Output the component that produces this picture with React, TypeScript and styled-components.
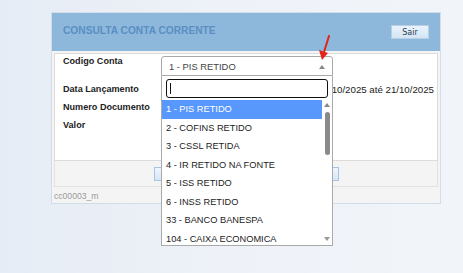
import React from "react";
import styled, { createGlobalStyle } from "styled-components";

const Global = createGlobalStyle`
  html, body { margin: 0; padding: 0; }
  body {
    width: 463px; height: 273px; overflow: hidden;
    background: linear-gradient(90deg, #e6ecf5 0%, #eef2f8 50%, #f1f4f9 100%);
    font-family: "Liberation Sans", Arial, sans-serif;
  }
`;

const Page = styled.div`
  position: relative;
  padding: 12px 0 0 51px;
`;

const Panel = styled.div`
  width: 388px;
  border: 1px solid #d3dde8;
  background: #f4f4f4;
  display: flex;
  flex-direction: column;
`;

const Header = styled.div`
  height: 38px;
  background: #8db8dc;
  display: flex;
  align-items: center;
  justify-content: space-between;
  padding: 0 11px 0 11px;
  box-sizing: border-box;
`;

const Title = styled.div`
  color: #5b8ec2;
  font-weight: bold;
  font-size: 10.2px;
  margin-top: -3px;
`;

const SairButton = styled.button`
  width: 38px;
  height: 14px;
  padding: 0;
  border: 1px solid #b8d0e6;
  background: linear-gradient(#eaf3fc, #d3e5f6);
  color: #2b3a4a;
  font-family: "DejaVu Sans", sans-serif;
  font-size: 8px;
`;

const Content = styled.div`
  margin: 2px 2px 0 2px;
  background: #ffffff;
  border: 1px solid #dcdcdc;
  padding: 2px 0 27px 8px;
  display: grid;
  grid-template-columns: 98px 172px 1fr;
  row-gap: 3px;
`;

const Label = styled.div<{ $tall?: boolean }>`
  font-weight: bold;
  font-size: 9.1px;
  color: #222;
  line-height: ${(p) => (p.$tall ? "11px" : "15px")};
  height: ${(p) => (p.$tall ? "20px" : "15px")};
`;

const Value = styled.div`
  font-size: 9.7px;
  color: #222;
  line-height: 15px;
  grid-column: 2 / 4;
  text-align: right;
  padding-right: 3px;
  white-space: nowrap;
`;

const Empty = styled.div`
  grid-column: 2 / 4;
`;

const SelectWrap = styled.div`
  position: relative;
  height: 20px;
  grid-column: 2 / 3;
`;

const SelectBox = styled.div`
  height: 20px;
  box-sizing: border-box;
  border: 1px solid #aaaaaa;
  border-radius: 3px 3px 0 0;
  background: #fff;
  display: flex;
  align-items: center;
  justify-content: space-between;
  padding: 0 7px 0 7px;
  font-size: 9.4px;
  color: #444;
`;

const Caret = styled.span`
  width: 0;
  height: 0;
  border-left: 3px solid transparent;
  border-right: 3px solid transparent;
  border-bottom: 4px solid #888;
  margin-top: 2px;
`;

const Dropdown = styled.div`
  position: absolute;
  top: 20px;
  left: 0;
  width: 172px;
  height: 170px;
  box-sizing: border-box;
  border: 1px solid #aaaaaa;
  border-top: none;
  background: #fff;
  z-index: 5;
  display: flex;
  flex-direction: column;
`;

const SearchBox = styled.div`
  margin: 3px 4px 2px 4px;
  height: 19px;
  box-sizing: border-box;
  border: 1.5px solid #111;
  border-radius: 3px;
  display: flex;
  align-items: center;
  padding-left: 3px;
`;

const Cursor = styled.span`
  width: 1px;
  height: 11px;
  background: #111;
`;

const ListArea = styled.div`
  flex: 1;
  display: flex;
  overflow: hidden;
`;

const Options = styled.div`
  flex: 1;
  display: flex;
  flex-direction: column;
`;

const Option = styled.div<{ $active?: boolean }>`
  height: 18.5px;
  flex: none;
  display: flex;
  align-items: center;
  padding-left: 4px;
  font-size: 9.25px;
  color: ${(p) => (p.$active ? "#fff" : "#222")};
  background: ${(p) => (p.$active ? "#5897fb" : "transparent")};
  white-space: nowrap;
`;

const Scrollbar = styled.div`
  width: 10px;
  display: flex;
  flex-direction: column;
  align-items: center;
  padding-top: 3px;
  box-sizing: border-box;
`;

const ScrollUp = styled.span`
  width: 0;
  height: 0;
  border-left: 3px solid transparent;
  border-right: 3px solid transparent;
  border-bottom: 4px solid #888;
`;

const ScrollDown = styled.span`
  width: 0;
  height: 0;
  border-left: 3px solid transparent;
  border-right: 3px solid transparent;
  border-top: 4px solid #999;
  margin-top: auto;
  margin-bottom: 4px;
`;

const Thumb = styled.span`
  width: 5px;
  height: 43px;
  border-radius: 3px;
  background: #8a8a8a;
  margin-top: 5px;
`;

const Footer = styled.div`
  margin: 0 2px 0 2px;
  border-left: 1px solid #e2e2e2;
  border-right: 1px solid #e2e2e2;
  border-bottom: 1px solid #e2e2e2;
  background: #f4f4f4;
  display: flex;
  justify-content: center;
  gap: 9px;
  padding: 6px 0 5px 0;
`;

const ActionButton = styled.button`
  width: 88px;
  height: 14px;
  padding: 0;
  border: 1px solid #a8c4e2;
  background: linear-gradient(#eef5fd, #d6e6f7);
  font-family: "Liberation Sans", Arial, sans-serif;
  font-size: 9px;
  color: #333;
`;

const Caption = styled.div`
  font-size: 8.6px;
  color: #9a9a9a;
  padding: 4px 0 2px 2px;
`;

const RedArrow = styled.svg`
  position: absolute;
  left: 316px;
  top: 35px;
  z-index: 6;
`;

const options = [
  "1 - PIS RETIDO",
  "2 - COFINS RETIDO",
  "3 - CSSL RETIDA",
  "4 - IR RETIDO NA FONTE",
  "5 - ISS RETIDO",
  "6 - INSS RETIDO",
  "33 - BANCO BANESPA",
  "104 - CAIXA ECONOMICA",
];

export default function App() {
  return (
    <>
      <Global />
      <Page>
        <Panel>
          <Header>
            <Title>CONSULTA CONTA CORRENTE</Title>
            <SairButton>Sair</SairButton>
          </Header>
          <Content>
            <Label $tall>Codigo Conta</Label>
            <SelectWrap>
              <SelectBox>
                <span>1 - PIS RETIDO</span>
                <Caret />
              </SelectBox>
              <Dropdown>
                <SearchBox>
                  <Cursor />
                </SearchBox>
                <ListArea>
                  <Options>
                    {options.map((o, i) => (
                      <Option key={o} $active={i === 0}>
                        {o}
                      </Option>
                    ))}
                  </Options>
                  <Scrollbar>
                    <ScrollUp />
                    <Thumb />
                    <ScrollDown />
                  </Scrollbar>
                </ListArea>
              </Dropdown>
            </SelectWrap>
            <Empty />
            <Label>Data Lançamento</Label>
            <Value>16/10/2025 até 21/10/2025</Value>
            <Label>Numero Documento</Label>
            <Empty />
            <Label>Valor</Label>
            <Empty />
          </Content>
          <Footer>
            <ActionButton>Consultar</ActionButton>
            <ActionButton>Limpar</ActionButton>
          </Footer>
          <Caption>cc00003_m</Caption>
        </Panel>
        <RedArrow width="18" height="26" viewBox="0 0 18 26">
          <line x1="13" y1="1" x2="8" y2="17" stroke="#e3241b" strokeWidth="2" strokeLinecap="round" />
          <polygon points="3,15 12,18 6,25" fill="#e3241b" />
        </RedArrow>
      </Page>
    </>
  );
}
